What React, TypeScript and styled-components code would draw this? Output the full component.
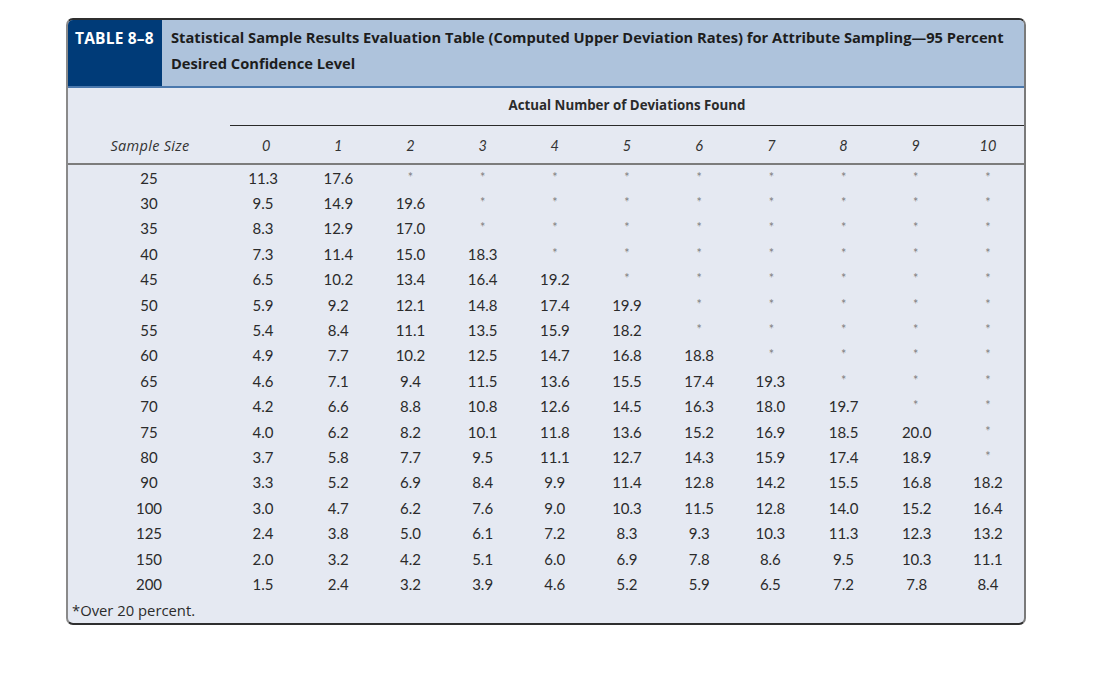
import React from "react";
import styled, { createGlobalStyle } from "styled-components";

const textFont = `"Open Sans", "Liberation Sans", sans-serif`;
const numFont = `Lato, "Liberation Sans", sans-serif`;

const GlobalStyle = createGlobalStyle`
  body {
    margin: 0;
    background: #ffffff;
    font-family: ${textFont};
    color: #2b2b2b;
  }
`;

const Frame = styled.div`
  margin: 18px 0 0 66px;
  width: 960px;
  box-sizing: border-box;
  border: 2px solid #2f2f2f;
  border-left-color: #8a8a8a;
  border-right-color: #7a7a7a;
  border-radius: 7px;
  overflow: hidden;
  background: #e5e9f2;
`;

const Header = styled.div`
  display: flex;
  height: 68px;
  box-sizing: border-box;
  border-bottom: 2px solid #4a78ad;
`;

const TableLabel = styled.div`
  flex: none;
  width: 94px;
  box-sizing: border-box;
  padding: 6px 0 0 7px;
  background: #003b78;
  color: #ffffff;
  font-weight: 700;
  font-size: 15.5px;
  line-height: 24px;
  letter-spacing: 0.2px;
  white-space: nowrap;
`;

const Title = styled.div`
  flex: 1;
  background: #aec3dc;
  padding: 4px 0 0 9px;
  font-weight: 700;
  font-size: 14.7px;
  line-height: 26px;
  color: #1d1d1d;
  white-space: nowrap;
`;

const Row = styled.div<{ $height: number; $line?: string; $lineFrom?: number }>`
  display: grid;
  grid-template-columns: 162px repeat(11, 1fr);
  align-items: center;
  height: ${(p) => p.$height}px;
  position: relative;
  ${(p) =>
    p.$line
      ? `
    &::after {
      content: "";
      position: absolute;
      left: ${p.$lineFrom ?? 0}px;
      right: 0;
      bottom: 0;
      border-bottom: ${p.$line};
    }
  `
      : ""}
`;

const Spanner = styled.div`
  grid-column: 2 / span 11;
  text-align: center;
  font-weight: 700;
  font-size: 13.3px;
  padding-bottom: 4px;
`;

const HeadCell = styled.div<{ $first?: boolean }>`
  text-align: center;
  font-style: italic;
  font-size: ${(p) => (p.$first ? "14.5px" : "14.5px")};
  letter-spacing: ${(p) => (p.$first ? "0.3px" : "0")};
  font-family: ${(p) => (p.$first ? textFont : numFont)};
  color: #333;
  ${(p) => (p.$first ? "padding-left: 2px;" : "")}
`;

const Cell = styled.div<{ $star?: boolean; $shift?: number }>`
  text-align: center;
  font-family: ${numFont};
  font-size: ${(p) => (p.$star ? "12.5px" : "15px")};
  color: ${(p) => (p.$star ? "#7f7f7f" : "#2b2b2b")};
  margin-left: ${(p) => (p.$shift ?? 0) * 2}px;
  padding-bottom: ${(p) => (p.$star ? "1px" : "0")};
`;

const Footnote = styled.div`
  font-size: 14.8px;
  padding: 4px 0 4px 4px;
  line-height: 18px;
  color: #2b2b2b;
`;

const rows: [number, string[]][] = [
  [25, ["11.3", "17.6"]],
  [30, ["9.5", "14.9", "19.6"]],
  [35, ["8.3", "12.9", "17.0"]],
  [40, ["7.3", "11.4", "15.0", "18.3"]],
  [45, ["6.5", "10.2", "13.4", "16.4", "19.2"]],
  [50, ["5.9", "9.2", "12.1", "14.8", "17.4", "19.9"]],
  [55, ["5.4", "8.4", "11.1", "13.5", "15.9", "18.2"]],
  [60, ["4.9", "7.7", "10.2", "12.5", "14.7", "16.8", "18.8"]],
  [65, ["4.6", "7.1", "9.4", "11.5", "13.6", "15.5", "17.4", "19.3"]],
  [70, ["4.2", "6.6", "8.8", "10.8", "12.6", "14.5", "16.3", "18.0", "19.7"]],
  [75, ["4.0", "6.2", "8.2", "10.1", "11.8", "13.6", "15.2", "16.9", "18.5", "20.0"]],
  [80, ["3.7", "5.8", "7.7", "9.5", "11.1", "12.7", "14.3", "15.9", "17.4", "18.9"]],
  [90, ["3.3", "5.2", "6.9", "8.4", "9.9", "11.4", "12.8", "14.2", "15.5", "16.8", "18.2"]],
  [100, ["3.0", "4.7", "6.2", "7.6", "9.0", "10.3", "11.5", "12.8", "14.0", "15.2", "16.4"]],
  [125, ["2.4", "3.8", "5.0", "6.1", "7.2", "8.3", "9.3", "10.3", "11.3", "12.3", "13.2"]],
  [150, ["2.0", "3.2", "4.2", "5.1", "6.0", "6.9", "7.8", "8.6", "9.5", "10.3", "11.1"]],
  [200, ["1.5", "2.4", "3.2", "3.9", "4.6", "5.2", "5.9", "6.5", "7.2", "7.8", "8.4"]],
];

const shifts = [-3, 0, 0, 0, 0, 0, 0, -1, 0, 1, 0];

export default function App() {
  return (
    <>
      <GlobalStyle />
      <Frame>
        <Header>
          <TableLabel>TABLE 8–8</TableLabel>
          <Title>
            Statistical Sample Results Evaluation Table (Computed Upper Deviation Rates) for
            Attribute Sampling—95 Percent
            <br />
            Desired Confidence Level
          </Title>
        </Header>
        <Row $height={38} $line="1.5px solid #2a2a2a" $lineFrom={162}>
          <Spanner>Actual Number of Deviations Found</Spanner>
        </Row>
        <Row $height={39} $line="2px solid #7c7c7c">
          <HeadCell $first>Sample Size</HeadCell>
          {Array.from({ length: 11 }, (_, i) => (
            <HeadCell key={i}>{i}</HeadCell>
          ))}
        </Row>
        {rows.map(([size, values]) => (
          <Row key={size} $height={25.4}>
            <Cell>{size}</Cell>
            {Array.from({ length: 11 }, (_, i) =>
              i < values.length ? (
                <Cell key={i} $shift={shifts[i]}>
                  {values[i]}
                </Cell>
              ) : (
                <Cell key={i} $star>
                  *
                </Cell>
              )
            )}
          </Row>
        ))}
        <Footnote>*Over 20 percent.</Footnote>
      </Frame>
    </>
  );
}
